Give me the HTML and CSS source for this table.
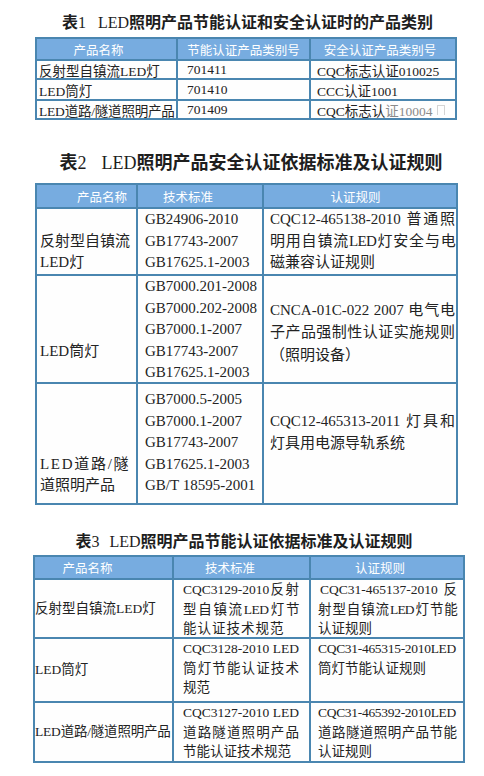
FILE: index.html
```html
<!DOCTYPE html>
<html lang="zh-CN">
<head>
<meta charset="utf-8">
<title>LED照明产品认证</title>
<link rel="stylesheet" href="styles.css">
</head>
<body>
<div class="page">

  <div class="title ti1"><span>表</span><span class="lat">1</span><span class="lat g1">LED</span>照明产品节能认证和安全认证时的产品类别</div>
  <div class="tbl tb1">
    <div class="h hl1">产品名称</div>
    <div class="h">节能认证产品类别号</div>
    <div class="h hr6">安全认证产品类别号</div>

    <div class="c b1 p2">反射型自镇流LED灯</div>
    <div class="c b1 p9">701411</div>
    <div class="c b1 p6">CQC标志认证010025</div>

    <div class="c b1 p2">LED筒灯</div>
    <div class="c b1 p9">701410</div>
    <div class="c b1 p6">CCC认证1001</div>

    <div class="c b1 p2 sq">LED道路/隧道照明产品</div>
    <div class="c b1 p9">701409</div>
    <div class="c b1 p6">CQC标志认<span class="wm">证10004</span><span class="wmbox"></span></div>
  </div>

  <div class="title ti2"><span>表</span><span class="lat">2</span><span class="lat g2">LED</span>照明产品安全认证依据标准及认证规则</div>
  <div class="tbl tb2">
    <div class="h hend">产品名称</div>
    <div class="h hstart">技术标准</div>
    <div class="h hr9">认证规则</div>

    <div class="c b2 k1 o1">
      <div class="l">反射型自镇流</div>
      <div class="l">LED灯</div>
    </div>
    <div class="c b2 k2">
      <div class="l">GB24906-2010</div>
      <div class="l">GB17743-2007</div>
      <div class="l">GB17625.1-2003</div>
    </div>
    <div class="c b2 k3">
      <div class="l j">CQC12-465138-2010 普通照</div>
      <div class="l j t07">明用自镇流LED灯安全与电</div>
      <div class="l">磁兼容认证规则</div>
    </div>

    <div class="c b2 k1 o3">
      <div class="l">LED筒灯</div>
    </div>
    <div class="c b2 k2">
      <div class="l">GB7000.201-2008</div>
      <div class="l">GB7000.202-2008</div>
      <div class="l">GB7000.1-2007</div>
      <div class="l">GB17743-2007</div>
      <div class="l">GB17625.1-2003</div>
    </div>
    <div class="c b2 k3 r2c3">
      <div class="l j">CNCA-01C-022 2007 电气电</div>
      <div class="l j">子产品强制性认证实施规则</div>
      <div class="l">（照明设备）</div>
    </div>

    <div class="c b2 k1 o3b">
      <div class="l wide">LED道路/隧</div>
      <div class="l">道照明产品</div>
    </div>
    <div class="c b2 k2 r3">
      <div class="l">GB7000.5-2005</div>
      <div class="l">GB7000.1-2007</div>
      <div class="l">GB17743-2007</div>
      <div class="l">GB17625.1-2003</div>
      <div class="l">GB/T 18595-2001</div>
    </div>
    <div class="c b2 k3 r3c3">
      <div class="l j">CQC12-465313-2011 灯具和</div>
      <div class="l">灯具用电源导轨系统</div>
    </div>
  </div>

  <div class="title ti3"><span>表</span><span class="lat">3</span><span class="lat g3">LED</span>照明产品节能认证依据标准及认证规则</div>
  <div class="tbl tb3">
    <div class="h h3a">产品名称</div>
    <div class="h h3b">技术标准</div>
    <div class="h h3c">认证规则</div>

    <div class="c b3 m1">反射型自镇流LED灯</div>
    <div class="c b3 m2">
      <div class="l j">CQC3129-2010反射</div>
      <div class="l j t05">型自镇流LED灯节</div>
      <div class="l sp1">能认证技术规范</div>
    </div>
    <div class="c b3 m3">
      <div class="l j ind">CQC31-465137-2010反</div>
      <div class="l j t08">射型自镇流LED灯节能</div>
      <div class="l">认证规则</div>
    </div>

    <div class="c b3 m1">LED筒灯</div>
    <div class="c b3 m2">
      <div class="l j">CQC3128-2010 LED</div>
      <div class="l j">筒灯节能认证技术</div>
      <div class="l">规范</div>
    </div>
    <div class="c b3 m3">
      <div class="l j t03">CQC31-465315-2010LED</div>
      <div class="l">筒灯节能认证规则</div>
    </div>

    <div class="c b3 m1 sq">LED道路/隧道照明产品</div>
    <div class="c b3 m2">
      <div class="l j">CQC3127-2010 LED</div>
      <div class="l j">道路隧道照明产品</div>
      <div class="l">节能认证技术规范</div>
    </div>
    <div class="c b3 m3">
      <div class="l j t03">CQC31-465392-2010LED</div>
      <div class="l j">道路隧道照明产品节能</div>
      <div class="l">认证规则</div>
    </div>
  </div>

</div>
</body>
</html>
```

FILE: styles.css
```css
* { box-sizing: border-box; }

html, body {
  margin: 0;
  padding: 0;
  background: #ffffff;
}

body {
  font-family: "Liberation Serif", "Noto Sans CJK SC", serif;
  color: #232323;
}

.page {
  width: 484px;
  padding-top: 12px;
  display: flow-root;
}

/* titles */
.title {
  font-family: "Liberation Serif", "Noto Sans CJK SC", serif;
  font-weight: bold;
  text-align: center;
  color: #1e1e1e;
  white-space: nowrap;
}
.title .lat { font-weight: normal; }
.ti1 { font-size: 16px; line-height: 22px; padding-left: 11px; }
.ti2 { font-size: 18px; line-height: 24px; padding-left: 18px; margin-top: 31px; }
.ti3 { font-size: 16px; line-height: 22px; padding-left: 4px; margin-top: 26px; }
.g1 { margin-left: 12px; }
.g2 { margin-left: 15px; }
.g3 { margin-left: 10px; }

/* grid tables */
.tbl {
  display: grid;
  gap: 2px;
  padding: 2px;
  background: #4a86b0;
}
.tb1 {
  margin-top: 3px;
  margin-left: 35px;
  width: 422px;
  grid-template-columns: 139px 131px 144px;
  grid-template-rows: 20px 17px 19px 17px;
}
.tb2 {
  margin-top: 8px;
  margin-left: 35px;
  width: 423px;
  grid-template-columns: 99px 124px 192px;
  grid-template-rows: 22px 65px 106px 119px;
}
.tb3 {
  margin-top: 2px;
  margin-left: 33px;
  width: 432px;
  grid-template-columns: 137px 135px 152px;
  grid-template-rows: 21px 57px 62px 58px;
}

.h {
  background: #77ace0;
  color: #ffffff;
  font-family: "Noto Sans CJK SC", sans-serif;
  font-size: 12.5px;
  display: flex;
  align-items: center;
  justify-content: center;
  white-space: nowrap;
}
.hl1 { padding-right: 16px; }
.hr6 { padding-right: 6px; }
.hend { justify-content: flex-end; padding-right: 9px; }
.hstart { justify-content: flex-start; padding-left: 25px; }
.hr9 { padding-right: 9px; }
.h3a { padding-right: 32px; }
.h3b { padding-right: 23px; }
.h3c { padding-right: 14px; }

.c { background: #fefefe; }

.l { white-space: nowrap; }
.j {
  white-space: normal;
  text-align: justify;
  text-align-last: justify;
}

/* table 1 body */
.b1 {
  font-size: 13.5px;
  display: flex;
  align-items: center;
  white-space: nowrap;
}
.p2 { padding-left: 2px; }
.p9 { padding-left: 9px; }
.p6 { padding-left: 6px; }
.sq { letter-spacing: -0.2px; }
.wm { color: #8a8a8a; }
.wmbox {
  display: inline-block;
  width: 8px;
  height: 10px;
  margin-left: 4px;
  border: 1px solid #d4d4d4;
  border-bottom: none;
}

/* table 2 body */
.b2 {
  font-size: 15px;
  line-height: 21.5px;
}
.k1 { padding-left: 3px; padding-right: 6px; }
.k2 { padding-left: 7px; }
.k3 { padding-left: 6px; padding-right: 1px; }
.o1 { padding-top: 21.5px; }
.o3 { padding-top: 64.5px; }
.o3b { padding-top: 69.5px; }
.r3 { padding-top: 5px; }
.r2c3 { padding-top: 22.5px; line-height: 22.5px; }
.r3c3 { padding-top: 27px; }
.t07 { letter-spacing: -0.7px; }
.wide { letter-spacing: 1.7px; }

/* table 3 body */
.b3 {
  font-size: 13.5px;
  line-height: 19.5px;
}
.m1 {
  display: flex;
  align-items: center;
  white-space: nowrap;
  padding-left: 0;
}
.m2 { padding-left: 9px; padding-right: 10px; }
.m3 { padding-left: 7px; padding-right: 6px; }
.t05 { letter-spacing: -0.5px; }
.t08 { letter-spacing: -0.8px; }
.t03 { letter-spacing: -0.3px; }
.sp1 { letter-spacing: 1px; }
.ind { padding-left: 2px; }
```
